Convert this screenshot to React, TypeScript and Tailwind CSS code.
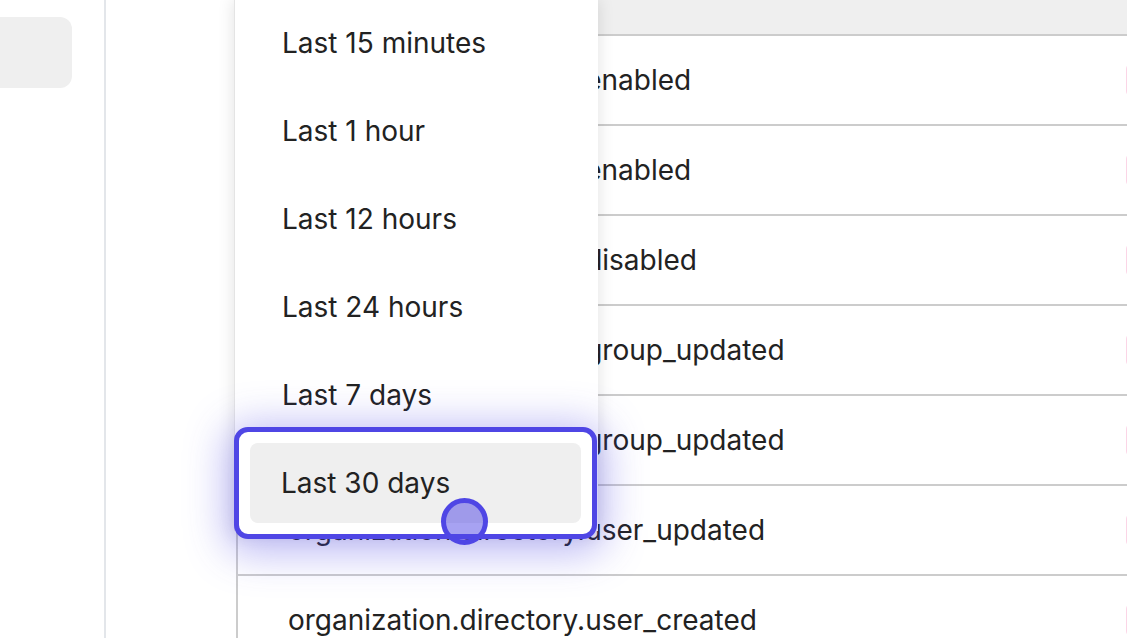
import React from 'react';

const ranges = ['Last 15 minutes', 'Last 1 hour', 'Last 12 hours', 'Last 24 hours', 'Last 7 days'];

const events = [
    'organization.directory.enabled',
    'organization.directory.enabled',
    'organization.directory.disabled',
    'organization.directory.group_updated',
    'organization.directory.group_updated',
    'organization.directory.user_updated',
    'organization.directory.user_created',
];

const App: React.FC = () => {
    return (
        <div className="relative w-[1127px] h-[638px] overflow-hidden bg-white flex font-['Inter',sans-serif] text-[#222222]">
            {/* sidebar */}
            <aside className="w-[106px] shrink-0 border-r-2 border-[#e3e6ea] pt-[17px]">
                <div className="-ml-[20px] w-[92px] h-[71px] rounded-[12px] bg-[#efefef]" />
            </aside>

            {/* events table */}
            <main className="flex-1 pl-[130px] min-w-0">
                <div className="border-l-2 border-[#cccccc] w-[1100px]">
                    <div className="h-[36px] bg-[#efefef] border-b-2 border-[#cccccc]" />
                    {events.map((e, i) => (
                        <div key={i} className="h-[90px] border-b-2 border-[#cccccc] grid grid-cols-[888px_auto] items-center">
                            <span className="pl-[50px] text-[28px] whitespace-nowrap">{e}</span>
                            <span className="h-[34px] w-[120px] rounded-md border border-[#fbd5e6] bg-[#fff7fb]" />
                        </div>
                    ))}
                </div>
            </main>

            {/* time range menu */}
            <div className="absolute left-[234px] top-[-5px] w-[364px] h-[536px] bg-white border-l border-[#e4e4e4] shadow-[0_4px_16px_rgba(0,0,0,0.12)] px-[16px] pt-[8px] flex flex-col gap-[8px]">
                {ranges.map((r) => (
                    <div key={r} className="h-[80px] shrink-0 rounded-[8px] flex items-center pl-[31px] text-[28px] whitespace-nowrap">
                        {r}
                    </div>
                ))}
            </div>

            {/* highlighted option */}
            <div className="absolute left-[234px] top-[427px] w-[363px] h-[112px] rounded-[14px] border-[5px] border-[#4f46e5] bg-white p-[11px] shadow-[0_6px_40px_8px_rgba(79,70,229,0.38)]">
                <div className="h-[80px] rounded-[8px] bg-[#efefef] flex items-center pl-[31px] text-[28px] whitespace-nowrap">
                    Last 30 days
                </div>
            </div>

            {/* cursor */}
            <div className="absolute left-[441px] top-[498px] w-[47px] h-[47px] rounded-full border-[5px] border-[#4f46e5] bg-[#4f46e5]/50" />
        </div>
    );
};

export default App;
